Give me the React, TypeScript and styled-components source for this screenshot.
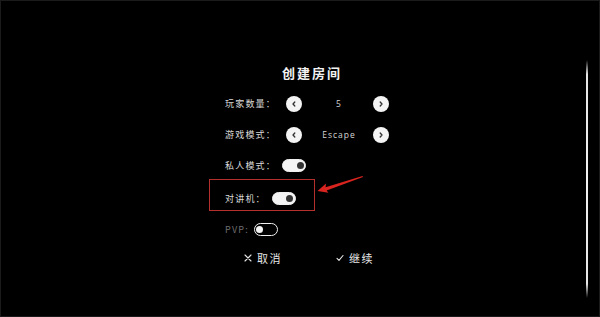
import React from "react";
import styled, { createGlobalStyle } from "styled-components";

const Global = createGlobalStyle`
  html, body { margin: 0; padding: 0; background: #000; }
  body { font-family: "Noto Sans CJK SC", "Noto Sans", sans-serif; }
`;

const Screen = styled.div`
  width: 600px;
  height: 317px;
  box-sizing: border-box;
  border: 1px solid #1b1b1b;
  background: #000;
  display: flex;
  overflow: hidden;
`;

const Panel = styled.div`
  margin-left: 224px;
  padding-top: 62px;
  width: 170px;
  display: flex;
  flex-direction: column;
`;

const Title = styled.div`
  width: 174px;
  text-align: center;
  font-size: 13px;
  font-weight: 700;
  letter-spacing: 2px;
  line-height: 20px;
  color: #f2f2f2;
  margin-bottom: 5px;
`;

const Row = styled.div<{ $gap?: number; $top?: number }>`
  position: relative;
  height: 31px;
  display: flex;
  align-items: center;
  gap: ${(p) => p.$gap ?? 6}px;
  margin-top: ${(p) => p.$top ?? 0}px;
`;

const Label = styled.span<{ $dim?: boolean; $width?: number }>`
  font-size: 9px;
  letter-spacing: 1.2px;
  color: ${(p) => (p.$dim ? "#6e6e6e" : "#d8d8d8")};
  width: ${(p) => (p.$width ? `${p.$width}px` : "auto")};
  white-space: nowrap;
`;

const Stepper = styled.div`
  display: flex;
  align-items: center;
`;

const RoundBtn = styled.div`
  width: 16px;
  height: 16px;
  border-radius: 50%;
  background: #f4f4f4;
  display: flex;
  align-items: center;
  justify-content: center;
`;

const Value = styled.span`
  width: 71px;
  padding-left: 3px;
  box-sizing: border-box;
  text-align: center;
  font-size: 8.5px;
  letter-spacing: 1px;
  color: #d6d6d6;
  font-family: "Open Sans", "Noto Sans", sans-serif;
`;

const Toggle = styled.div<{ $on: boolean }>`
  width: 24px;
  height: 13px;
  box-sizing: border-box;
  border-radius: 7px;
  background: ${(p) => (p.$on ? "#f4f4f4" : "transparent")};
  border: 1.5px solid #f0f0f0;
  display: flex;
  align-items: center;
  justify-content: ${(p) => (p.$on ? "flex-end" : "flex-start")};
  padding: 0 1.5px;
`;

const Knob = styled.div<{ $on: boolean }>`
  width: 7px;
  height: 7px;
  border-radius: 50%;
  background: ${(p) => (p.$on ? "#333" : "#f4f4f4")};
`;

const Highlight = styled.div`
  position: absolute;
  left: -16px;
  top: -4px;
  width: 106px;
  height: 32px;
  box-sizing: border-box;
  border: 1.5px solid #b3302d;
  pointer-events: none;
`;

const Arrow = styled.svg`
  position: absolute;
  left: 91px;
  top: -12px;
`;

const Actions = styled.div`
  height: 26px;
  display: flex;
  align-items: center;
  padding-left: 19px;
  gap: 54px;
`;

const ActionBtn = styled.span`
  font-size: 11px;
  letter-spacing: 1.5px;
  color: #e6e6e6;
  display: flex;
  align-items: center;
  gap: 5px;
  white-space: nowrap;
`;

const EdgeLine = styled.div`
  margin-left: auto;
  margin-right: 11px;
  margin-top: 59px;
  align-self: flex-start;
  width: 2px;
  height: 238px;
  border-radius: 1px;
  background: linear-gradient(
    to bottom,
    rgba(255, 255, 255, 0) 0%,
    rgba(255, 255, 255, 0.9) 6%,
    rgba(255, 255, 255, 0.95) 50%,
    rgba(255, 255, 255, 0.9) 94%,
    rgba(255, 255, 255, 0) 100%
  );
`;

const Chevron = ({ dir }: { dir: "left" | "right" }) => (
  <svg width="6" height="6" viewBox="0 0 6 6">
    <path
      d={dir === "left" ? "M3.8 1 L2 3 L3.8 5" : "M2.2 1 L4 3 L2.2 5"}
      fill="none"
      stroke="#333"
      strokeWidth="1.3"
      strokeLinecap="round"
      strokeLinejoin="round"
    />
  </svg>
);

const CrossIcon = () => (
  <svg width="8" height="8" viewBox="0 0 8 8">
    <path d="M1 1 L7 7 M7 1 L1 7" stroke="#e6e6e6" strokeWidth="1.1" strokeLinecap="round" />
  </svg>
);

const CheckIcon = () => (
  <svg width="8" height="8" viewBox="0 0 8 8">
    <path
      d="M1 4.3 L3 6.3 L7 1.5"
      fill="none"
      stroke="#e6e6e6"
      strokeWidth="1.1"
      strokeLinecap="round"
      strokeLinejoin="round"
    />
  </svg>
);

const StepRow = ({ label, value }: { label: string; value: string }) => (
  <Row $gap={11}>
    <Label $width={50}>{label}</Label>
    <Stepper>
      <RoundBtn>
        <Chevron dir="left" />
      </RoundBtn>
      <Value>{value}</Value>
      <RoundBtn>
        <Chevron dir="right" />
      </RoundBtn>
    </Stepper>
  </Row>
);

const Switch = ({ on }: { on: boolean }) => (
  <Toggle $on={on}>
    <Knob $on={on} />
  </Toggle>
);

export default function App() {
  return (
    <>
      <Global />
      <Screen>
        <Panel>
          <Title>创建房间</Title>
          <StepRow label="玩家数量：" value="5" />
          <StepRow label="游戏模式：" value="Escape" />
          <Row>
            <Label>私人模式：</Label>
            <Switch on />
          </Row>
          <Row $top={2}>
            <Label>对讲机：</Label>
            <Switch on />
            <Highlight />
            <Arrow width="50" height="24" viewBox="0 0 50 24">
              <path
                d="M1.5 20 L10 12.5 L9.6 16.2 L46.5 5 L47 6 L10.6 19.6 L12.5 21.8 Z"
                fill="#d9241f"
              />
            </Arrow>
          </Row>
          <Row $gap={5}>
            <Label $dim>PVP:</Label>
            <Switch on={false} />
          </Row>
          <Actions>
            <ActionBtn>
              <CrossIcon />
              取消
            </ActionBtn>
            <ActionBtn>
              <CheckIcon />
              继续
            </ActionBtn>
          </Actions>
        </Panel>
        <EdgeLine />
      </Screen>
    </>
  );
}
